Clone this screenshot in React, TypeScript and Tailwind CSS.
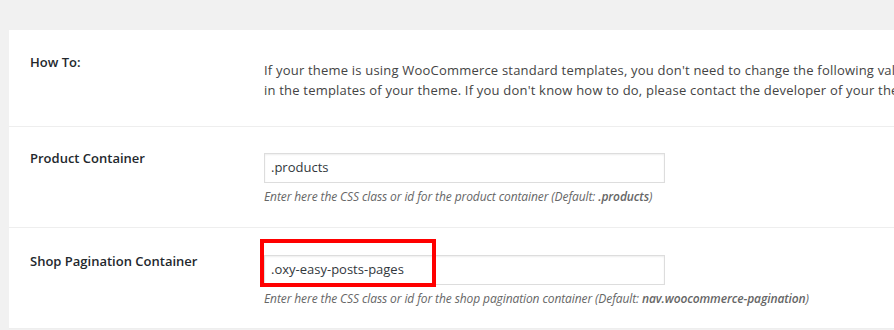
const font = { fontFamily: '"Open Sans", "Noto Sans", sans-serif' };

interface FieldRowProps {
    label: string;
    value: string;
    help: string;
    strong: string;
    labelTop: string;
    fieldTop: string;
    highlight?: boolean;
}

function FieldRow({ label, value, help, strong, labelTop, fieldTop, highlight }: FieldRowProps) {
    return (
        <div className="flex h-[101px] border-b border-[#eeeeee]">
            <div className={`w-[255px] shrink-0 pl-[21px] ${labelTop}`}>
                <p className="text-[13px] font-semibold leading-5 text-[#23282d]">{label}</p>
            </div>
            <div className={`flex flex-col ${fieldTop}`}>
                <div className="relative">
                    <div className="flex h-[30px] w-[401px] items-center border border-[#dddddd] px-[6px] text-[13px] text-[#32373c] shadow-[inset_0_1px_2px_rgba(0,0,0,0.07)]">
                        {value}
                    </div>
                    {highlight && (
                        <div className="absolute left-[-4px] top-[-16px] h-[48px] w-[176px] border-4 border-[#ff0000]" />
                    )}
                </div>
                <p className="mt-1 whitespace-nowrap text-[12px] italic leading-5 tracking-[-0.1px] text-[#666666]">
                    {help} (Default: <strong className="font-semibold">{strong}</strong>)
                </p>
            </div>
        </div>
    );
}

export default function App() {
    return (
        <div className="h-[330px] w-[894px] overflow-hidden bg-[#f1f1f1] pl-[9px] pt-[30px]" style={font}>
            <div className="bg-white">
                <div className="flex h-[97px] border-b border-[#eeeeee]">
                    <div className="w-[255px] shrink-0 pl-[21px] pt-[22px]">
                        <p className="text-[13px] font-semibold leading-5 text-[#23282d]">How To:</p>
                    </div>
                    <div className="pt-[30px] text-[13px] leading-5 tracking-[0.2px] text-[#444444]">
                        <p className="whitespace-nowrap">
                            If your theme is using WooCommerce standard templates, you don't need to change the following values. Otherwise, check the classes used
                        </p>
                        <p className="whitespace-nowrap">
                            in the templates of your theme. If you don't know how to do, please contact the developer of your theme.
                        </p>
                    </div>
                </div>

                <FieldRow
                    label="Product Container"
                    value=".products"
                    help="Enter here the CSS class or id for the product container"
                    strong=".products"
                    labelTop="pt-[21px]"
                    fieldTop="pt-[26px]"
                />

                <FieldRow
                    label="Shop Pagination Container"
                    value=".oxy-easy-posts-pages"
                    help="Enter here the CSS class or id for the shop pagination container"
                    strong="nav.woocommerce-pagination"
                    labelTop="pt-[23px]"
                    fieldTop="pt-[27px]"
                    highlight
                />
            </div>
        </div>
    );
}
